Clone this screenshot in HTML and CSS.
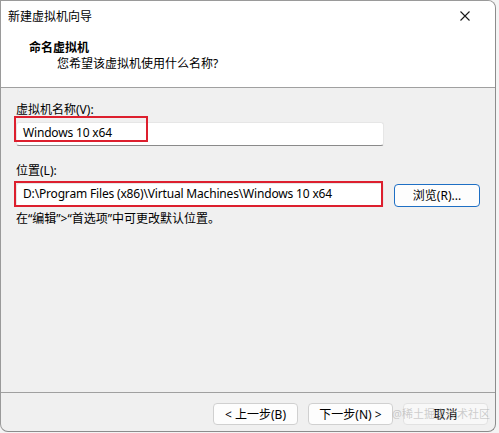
FILE: index.html
```html
<!DOCTYPE html>
<html lang="zh-CN">
<head>
<meta charset="utf-8">
<title>新建虚拟机向导</title>
<link rel="stylesheet" href="styles.css">
</head>
<body>
<div class="window">
  <div class="titlebar">
    <span class="title">新建虚拟机向导</span>
    <svg class="close" width="10" height="10" viewBox="0 0 10 10"><path d="M0.5 0.5 L9.5 9.5 M9.5 0.5 L0.5 9.5" stroke="#1a1a1a" stroke-width="1.1" fill="none"/></svg>
  </div>
  <div class="header">
    <div class="h-title">命名虚拟机</div>
    <div class="h-sub">您希望该虚拟机使用什么名称?</div>
  </div>
  <div class="content">
    <div class="label">虚拟机名称(V):</div>
    <div class="row">
      <div class="input">Windows 10 x64</div>
      <span class="mark mark-name"></span>
    </div>
    <div class="label label-loc">位置(L):</div>
    <div class="row">
      <div class="input">D:\Program Files (x86)\Virtual Machines\Windows 10 x64</div>
      <button class="btn btn-browse">浏览(R)...</button>
      <span class="mark mark-loc"></span>
    </div>
    <div class="hint">在“编辑”&gt;“首选项”中可更改默认位置。</div>
  </div>
  <div class="footer">
    <button class="btn">&lt; 上一步(B)</button>
    <button class="btn">下一步(N) &gt;</button>
    <button class="btn btn-cancel">取消</button>
    <span class="watermark">@稀土掘金技术社区</span>
  </div>
</div>
</body>
</html>
```

FILE: styles.css
```css
* { box-sizing: border-box; }
html, body {
  margin: 0;
  padding: 0;
  width: 499px;
  height: 433px;
  overflow: hidden;
  background: #f4f4f4;
  font-family: "Segoe UI", "Noto Sans", "Noto Sans CJK SC", sans-serif;
  font-size: 12px;
  color: #000;
}
.window {
  width: 496px;
  height: 432px;
  border-top: 1px solid #9a9a9a;
  border-left: 1px solid #9a9a9a;
  border-right: 1px solid #8c8c8c;
  border-bottom: 1px solid #8c8c8c;
  border-radius: 0 8px 8px 8px;
  background: #f0f0f0;
  display: flex;
  flex-direction: column;
  overflow: hidden;
  position: relative;
}
.titlebar {
  height: 30px;
  background: #fff;
  display: flex;
  align-items: center;
  justify-content: space-between;
  padding: 0 25px 0 7px;
  flex: none;
}
.title { font-size: 12px; line-height: 16px; margin-top: 1px; }
.close { display: block; margin-top: 0; }
.header {
  height: 57px;
  background: #fff;
  border-bottom: 1px solid #a0a0a0;
  padding: 9px 0 0 28px;
  flex: none;
}
.h-title { font-weight: bold; font-size: 12px; line-height: 16px; }
.h-sub { padding-left: 28px; line-height: 16px; margin-top: 0; }
.content {
  flex: 1;
  padding: 14px 0 0 15px;
  display: flex;
  flex-direction: column;
}
.label { line-height: 16px; height: 16px; }
.label-loc { margin-top: 17px; }
.row {
  position: relative;
  display: flex;
  align-items: center;
  gap: 10px;
  margin-top: 4px;
}
.input {
  width: 368px;
  height: 24px;
  background: #fff;
  border: 1px solid #e6e6e6;
  border-bottom-color: #8a8a8a;
  border-radius: 3px;
  padding: 0 0 2px 6px;
  display: flex;
  align-items: center;
  line-height: 16px;
  letter-spacing: -0.17px;
  white-space: nowrap;
}
.btn {
  font: inherit;
  font-size: 12px;
  height: 22px;
  width: 85px;
  background: #fdfdfd;
  border: 1px solid #d0d0d0;
  border-radius: 4px;
  padding: 0;
  color: #000;
  display: flex;
  align-items: center;
  justify-content: center;
}
.btn-browse {
  width: 86px;
  height: 23px;
  border-color: #1e6fc4;
}
.mark {
  position: absolute;
  border: 2px solid #dd1f2e;
  pointer-events: none;
}
.mark-name { left: -2px; top: -6px; width: 134px; height: 26px; }
.mark-loc { left: -2px; top: -2px; width: 369px; height: 26px; }
.hint { margin-top: 4px; line-height: 16px; }
.footer {
  height: 39px;
  flex: none;
  border-top: 1px solid #a0a0a0;
  display: flex;
  justify-content: flex-end;
  align-items: flex-start;
  gap: 10px;
  padding: 10px 7px 0 0;
  position: relative;
}
.btn-cancel {
  border-color: #e2e2e2;
  background: #f8f8f8;
}
.watermark {
  position: absolute;
  left: 391px;
  top: 13px;
  font-size: 11px;
  line-height: 16px;
  color: rgba(160, 160, 160, 0.5);
  pointer-events: none;
  white-space: nowrap;
}
```
